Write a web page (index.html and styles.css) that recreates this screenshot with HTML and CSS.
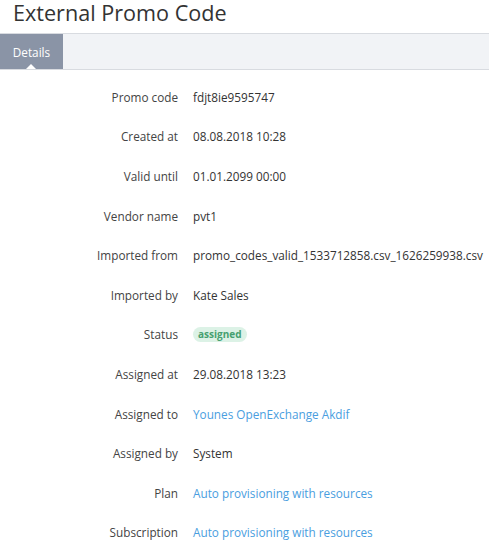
FILE: index.html
```html
<!DOCTYPE html>
<html>
<head>
<meta charset="utf-8">
<link rel="stylesheet" href="styles.css">
</head>
<body>
<h1 class="title">External Promo Code</h1>
<div class="tabs">
  <div class="tab active">Details</div>
</div>
<div class="details">
  <div class="label">Promo code</div><div class="value">fdjt8ie9595747</div>
  <div class="label">Created at</div><div class="value">08.08.2018 10:28</div>
  <div class="label">Valid until</div><div class="value">01.01.2099 00:00</div>
  <div class="label">Vendor name</div><div class="value">pvt1</div>
  <div class="label">Imported from</div><div class="value">promo_codes_valid_1533712858.csv_1626259938.csv</div>
  <div class="label">Imported by</div><div class="value">Kate Sales</div>
  <div class="label">Status</div><div class="value"><span class="badge">assigned</span></div>
  <div class="label">Assigned at</div><div class="value">29.08.2018 13:23</div>
  <div class="label">Assigned to</div><div class="value"><a class="link" href="#">Younes OpenExchange Akdif</a></div>
  <div class="label">Assigned by</div><div class="value">System</div>
  <div class="label">Plan</div><div class="value"><a class="link" href="#">Auto provisioning with resources</a></div>
  <div class="label">Subscription</div><div class="value"><a class="link" href="#">Auto provisioning with resources</a></div>
</div>
</body>
</html>
```
FILE: styles.css
```css
html, body {
  margin: 0;
  padding: 0;
  background: #fff;
  font-family: "Open Sans", "Liberation Sans", sans-serif;
  color: #333;
}
.title {
  margin: 0;
  padding: 0 0 0 13px;
  height: 33px;
  font-size: 21.6px;
  font-weight: 400;
  line-height: 26px;
  color: #333;
}
.tabs {
  display: flex;
  height: 35px;
  background: #f1f3f6;
  border-top: 1px solid #d8dbe0;
  border-bottom: 1px solid #d8dbe0;
}
.tab {
  position: relative;
  width: 63px;
  display: flex;
  align-items: center;
  justify-content: center;
  font-size: 11.75px;
  color: #fff;
}
.tab.active {
  background: #8a94a6;
}
.tab.active::after {
  content: "";
  position: absolute;
  left: 26px;
  bottom: 0;
  border-left: 5px solid transparent;
  border-right: 5px solid transparent;
  border-bottom: 5px solid #fff;
}
.details {
  display: grid;
  grid-template-columns: 178px 1fr;
  column-gap: 15px;
  grid-auto-rows: 39.6px;
  padding-top: 7px;
  font-size: 11.75px;
}
.label, .value {
  display: flex;
  align-items: center;
  white-space: nowrap;
}
.label {
  justify-content: flex-end;
  color: #444;
}
.value {
  color: #333;
}
.link {
  color: #4a9ee0;
  text-decoration: none;
}
.badge {
  display: inline-block;
  background: #dcf2e6;
  color: #46a070;
  font-weight: 700;
  font-size: 10px;
  line-height: 15px;
  padding: 0 5px;
  border-radius: 8px;
}
```
